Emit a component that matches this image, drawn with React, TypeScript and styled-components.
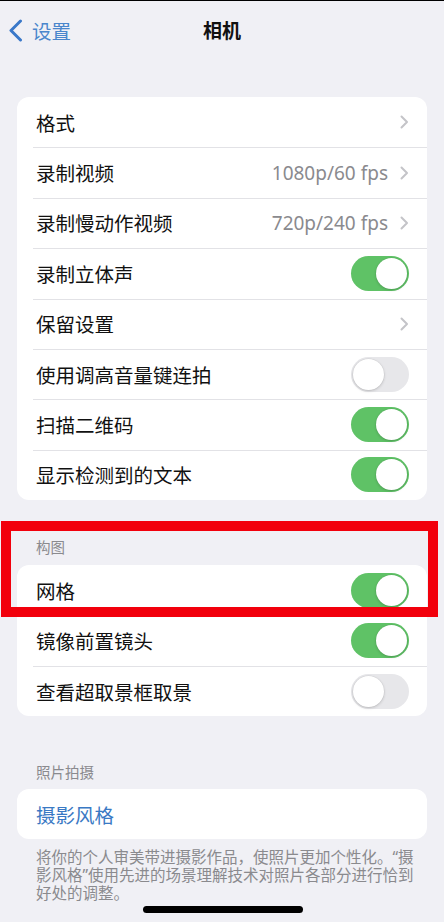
import * as React from 'react';
import styled, {createGlobalStyle} from "styled-components";

const GlobalStyle = createGlobalStyle`
  html, body {
    margin: 0;
    padding: 0;
    background: #f0f0f5;
  }
  body {
    font-family: "Noto Sans", "Noto Sans CJK SC", sans-serif;
    -webkit-font-smoothing: antialiased;
  }
`;

const Screen = styled.div`
  position: relative;
  width: 444px;
  height: 922px;
  overflow: hidden;
  background: #f0f0f5;
  border-top: 1px solid #000;
  box-sizing: border-box;
`;

const NavBar = styled.div`
  display: grid;
  grid-template-columns: 1fr auto 1fr;
  align-items: center;
  height: 58px;
  padding: 0 8px 3px;
`;

const BackButton = styled.div`
  display: flex;
  align-items: center;
  gap: 9px;
  color: #4a86cc;
  font-size: 19.5px;
`;

const NavTitle = styled.div`
  font-size: 19px;
  font-weight: 700;
  color: #111;
`;

const Content = styled.div`
  display: flex;
  flex-direction: column;
  padding: 35px 17px 0;
`;

const Group = styled.div`
  background: #fff;
  border-radius: 12px;
  overflow: hidden;
`;

const Row = styled.div<{ $tall?: boolean }>`
  position: relative;
  display: flex;
  align-items: center;
  height: ${p => (p.$tall ? 50 : 50.4)}px;
  padding: 0 18px 0 19px;

  & + &::before {
    content: "";
    position: absolute;
    top: 0;
    left: 16px;
    right: 0;
    height: 1px;
    background: #e2e2e6;
  }
`;

const Label = styled.div<{ $link?: boolean }>`
  flex: 1;
  font-size: 19.5px;
  color: ${p => (p.$link ? "#3a79c4" : "#111")};
`;

const Value = styled.div`
  font-size: 19px;
  color: #8a8a8e;
  margin-right: 12px;
`;

const SectionHeader = styled.div<{ $top: number; $bottom: number }>`
  margin: ${p => p.$top}px 0 ${p => p.$bottom}px;
  padding-left: 19px;
  height: 20px;
  line-height: 20px;
  font-size: 14.5px;
  color: #8a8a8e;
`;

const HighlightWrap = styled.div`
  position: relative;
`;

const Highlight = styled.div`
  position: absolute;
  top: 21px;
  left: -16px;
  width: 437px;
  height: 96px;
  border: 10px solid #f2000c;
  box-sizing: border-box;
  pointer-events: none;
`;

const Footer = styled.div`
  margin-top: 9px;
  padding-left: 19px;
  font-size: 15.5px;
  line-height: 18px;
  color: #8a8a8e;
  white-space: nowrap;
`;

const HomeIndicator = styled.div`
  position: absolute;
  left: 143px;
  bottom: 9px;
  width: 160px;
  height: 7px;
  border-radius: 4px;
  background: #000;
`;

const Track = styled.div<{ $on: boolean }>`
  position: relative;
  width: 58px;
  height: 35px;
  border-radius: 18px;
  background: ${p => (p.$on ? "#5fc266" : "#e7e7ea")};
  flex-shrink: 0;
`;

const Knob = styled.div<{ $on: boolean }>`
  position: absolute;
  top: 2px;
  left: ${p => (p.$on ? 25 : 2)}px;
  width: 31px;
  height: 31px;
  border-radius: 50%;
  background: #fff;
  box-shadow: 0 1px 3px rgba(0, 0, 0, 0.18), 0 0 0 0.5px rgba(0, 0, 0, 0.06);
`;

const Toggle = ({on}: { on: boolean }) => (
  <Track $on={on}><Knob $on={on} /></Track>
);

const Chevron = () => (
  <svg width="9" height="14" viewBox="0 0 9 14">
    <path d="M1.5 1.5 L7 7 L1.5 12.5" fill="none" stroke="#c4c4c8" strokeWidth="2"
          strokeLinecap="round" strokeLinejoin="round" />
  </svg>
);

const BackChevron = () => (
  <svg width="15" height="23" viewBox="0 0 15 23">
    <path d="M12.5 2 L3 11.5 L12.5 21" fill="none" stroke="#3a78c9" strokeWidth="3"
          strokeLinecap="round" strokeLinejoin="round" />
  </svg>
);

interface IItem {
  label: string,
  value?: string,
  toggle?: boolean,
}

const mainItems: IItem[] = [
  {label: "格式"},
  {label: "录制视频", value: "1080p/60 fps"},
  {label: "录制慢动作视频", value: "720p/240 fps"},
  {label: "录制立体声", toggle: true},
  {label: "保留设置"},
  {label: "使用调高音量键连拍", toggle: false},
  {label: "扫描二维码", toggle: true},
  {label: "显示检测到的文本", toggle: true},
];

const compositionItems: IItem[] = [
  {label: "网格", toggle: true},
  {label: "镜像前置镜头", toggle: true},
  {label: "查看超取景框取景", toggle: false},
];

const SettingRow = ({item}: { item: IItem }) => (
  <Row>
    <Label>{item.label}</Label>
    {item.value && <Value>{item.value}</Value>}
    {item.toggle === undefined ? <Chevron /> : <Toggle on={item.toggle} />}
  </Row>
);

const App = () => (
  <Screen>
    <GlobalStyle />
    <NavBar>
      <BackButton><BackChevron />设置</BackButton>
      <NavTitle>相机</NavTitle>
      <div />
    </NavBar>
    <Content>
      <Group>
        {mainItems.map(item => <SettingRow key={item.label} item={item} />)}
      </Group>

      <HighlightWrap>
        <SectionHeader $top={37} $bottom={8}>构图</SectionHeader>
        <Group>
          {compositionItems.map(item => <SettingRow key={item.label} item={item} />)}
        </Group>
        <Highlight />
      </HighlightWrap>

      <SectionHeader $top={46} $bottom={7}>照片拍摄</SectionHeader>
      <Group>
        <Row $tall><Label $link>摄影风格</Label></Row>
      </Group>
      <Footer>
        将你的个人审美带进摄影作品，使照片更加个性化。“摄<br />
        影风格”使用先进的场景理解技术对照片各部分进行恰到<br />
        好处的调整。
      </Footer>
    </Content>
    <HomeIndicator />
  </Screen>
);

export default App;
